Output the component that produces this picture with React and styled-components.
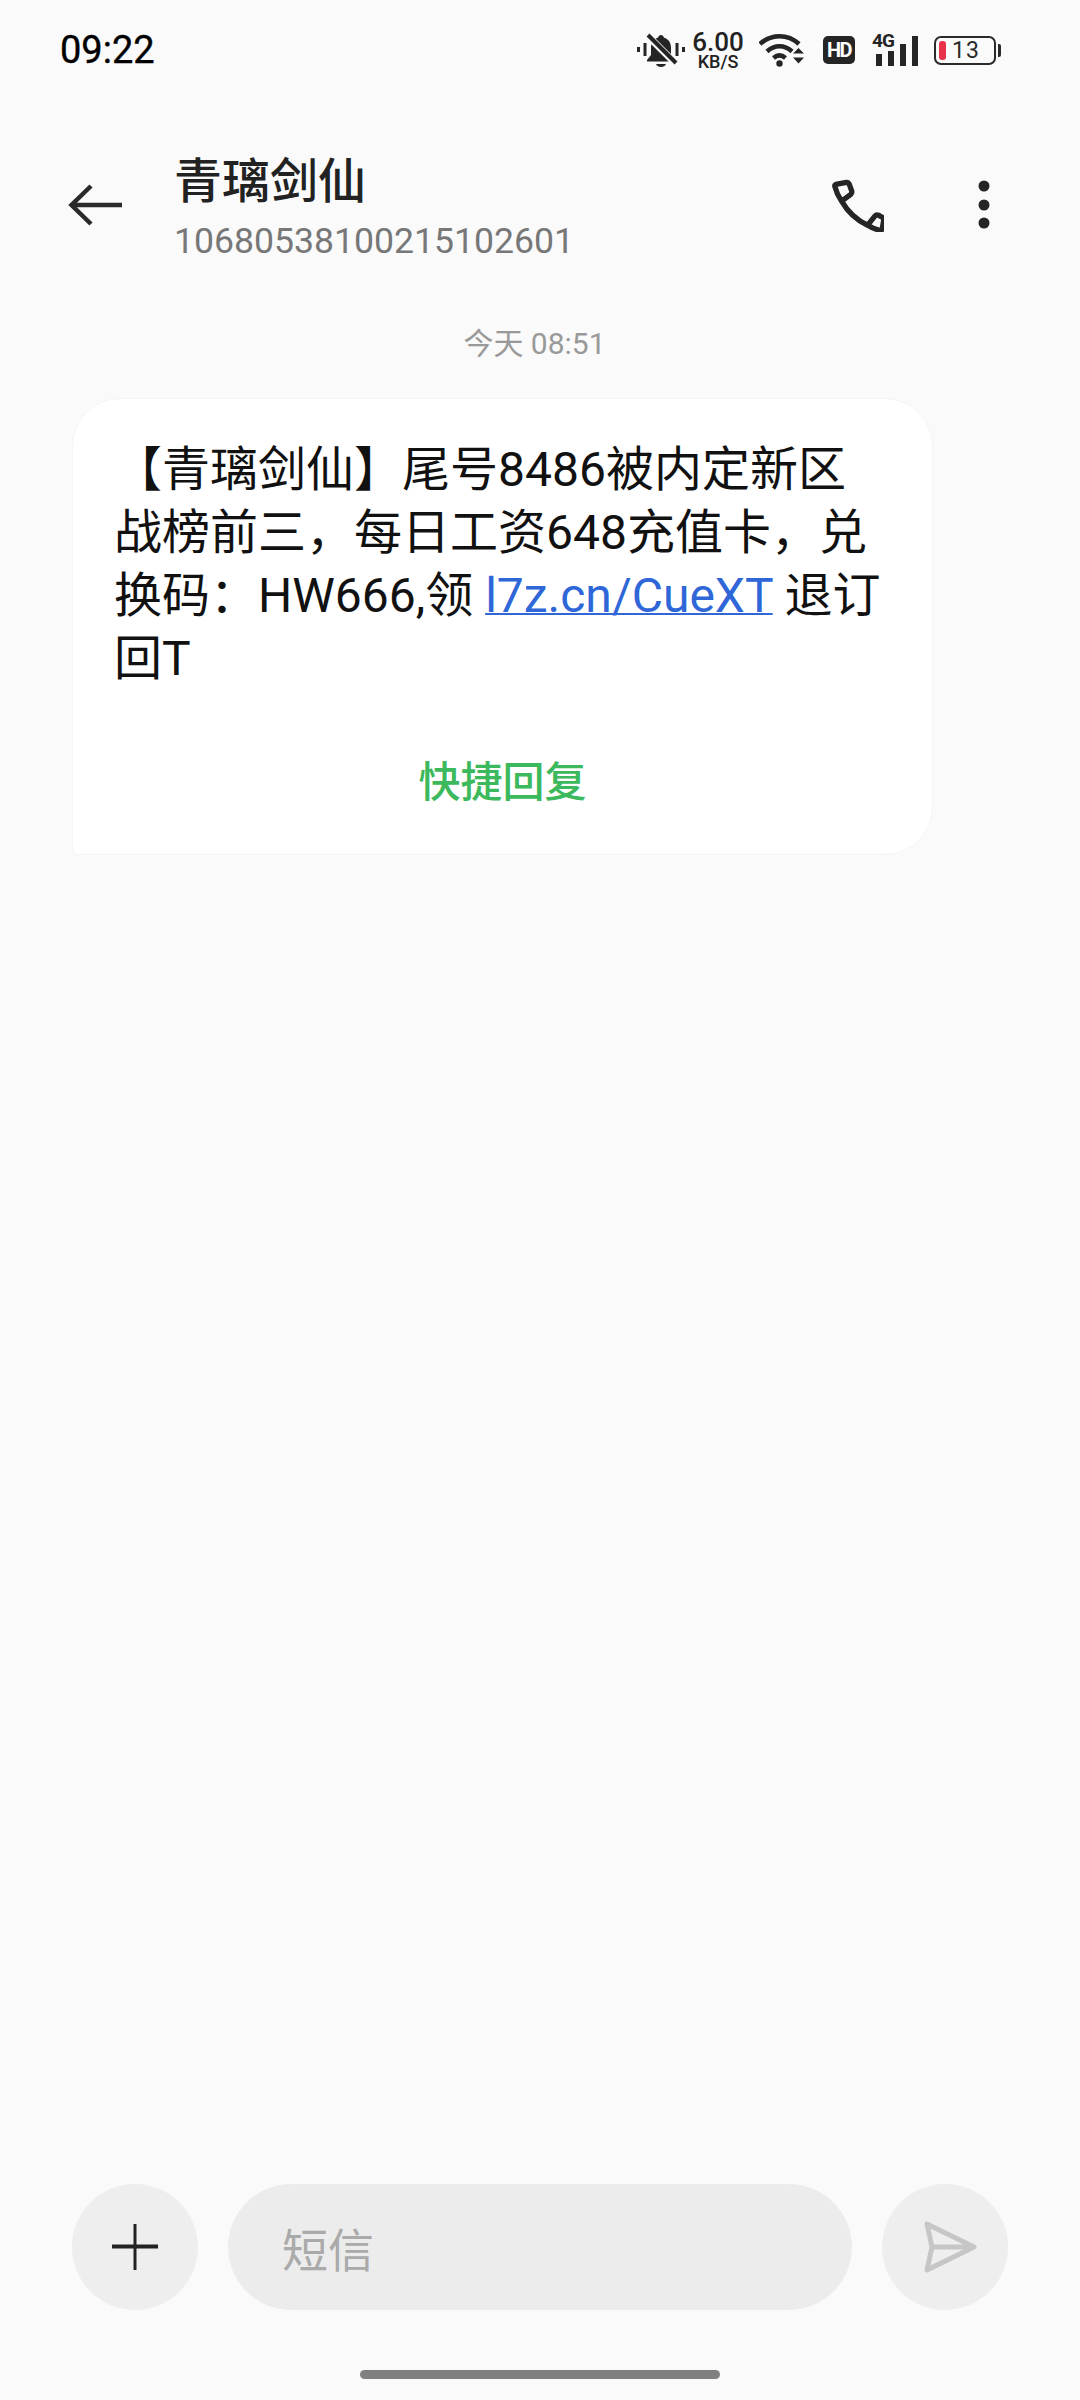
import React from 'react';
import styled, { createGlobalStyle } from 'styled-components';

const GlobalStyle = createGlobalStyle`
  html, body {
    margin: 0;
    padding: 0;
    background: #fafafa;
  }
  body {
    font-family: Roboto, "Noto Sans CJK SC", sans-serif;
  }
`;

const Page = styled.div`
  width: 1080px;
  height: 2400px;
  display: flex;
  flex-direction: column;
  background: #fafafa;
  overflow: hidden;
`;

const StatusBar = styled.div`
  height: 100px;
  display: flex;
  align-items: center;
  justify-content: space-between;
  padding: 0 79px 0 60px;
  box-sizing: border-box;
`;

const Time = styled.div`
  font-size: 38px;
  font-weight: 400;
  color: #000;
  -webkit-text-stroke: 0.4px #000;
`;

const StatusIcons = styled.div`
  display: flex;
  align-items: center;
`;

const Speed = styled.div`
  width: 52px;
  margin: 0 15px 0 7px;
  display: flex;
  flex-direction: column;
  align-items: center;
  color: #222;
  font-weight: 500;
`;

const SpeedValue = styled.span`
  font-size: 26px;
  line-height: 22px;
`;

const SpeedUnit = styled.span`
  font-size: 18px;
  line-height: 17px;
`;

const HdBadge = styled.div`
  width: 32px;
  height: 28px;
  margin: 0 17px 0 18px;
  border-radius: 5px;
  background: #252525;
  color: #fff;
  font-size: 20px;
  font-weight: 700;
  line-height: 28px;
  text-align: center;
  letter-spacing: -1.500px;
`;

const Signal = styled.div`
  position: relative;
  width: 46px;
  height: 32px;
  margin-right: 16px;
  display: flex;
  align-items: flex-end;
  justify-content: flex-end;
  gap: 6px;
`;

const SignalLabel = styled.span`
  position: absolute;
  left: 0;
  top: -1px;
  font-size: 19px;
  font-weight: 700;
  line-height: 16px;
  letter-spacing: -1px;
  color: #252525;
`;

const SignalBar = styled.span`
  width: 6px;
  height: ${(p) => p.$h}px;
  background: #252525;
`;

const Battery = styled.div`
  width: 62px;
  height: 29px;
  border: 2px solid #2a2a2a;
  border-radius: 7px;
  box-sizing: border-box;
  padding: 3px;
  display: flex;
  align-items: stretch;
  position: relative;
`;

const BatteryLevel = styled.span`
  width: 7px;
  background: #e8324a;
  border-radius: 3px;
`;

const BatteryText = styled.span`
  margin-left: 6px;
  font-size: 23px;
  line-height: 20px;
  letter-spacing: 1px;
  color: #2a2a2a;
`;

const BatteryCap = styled.span`
  width: 3px;
  height: 13px;
  margin-left: 2px;
  background: #2a2a2a;
  border-radius: 0 2px 2px 0;
`;

const Header = styled.div`
  height: 116px;
  margin-top: 50px;
  display: flex;
  align-items: flex-start;
  padding-left: 68px;
  box-sizing: border-box;
`;

const IconSlot = styled.div`
  width: ${(p) => p.$w}px;
  height: 110px;
  display: flex;
  align-items: center;
  flex-shrink: 0;
`;

const TitleBlock = styled.div`
  flex: 1;
  padding-left: 2px;
  display: flex;
  flex-direction: column;
`;

const Title = styled.div`
  font-size: 48px;
  font-weight: 500;
  line-height: 60px;
  margin-top: 2px;
  color: #222;
`;

const Subtitle = styled.div`
  font-size: 35.600px;
  line-height: 42px;
  margin-top: 8px;
  color: #777;
`;

const DateLine = styled.div`
  margin-top: 58px;
  padding-right: 11px;
  text-align: center;
  font-size: 30px;
  line-height: 40px;
  color: #999;
`;

const Bubble = styled.div`
  width: 861px;
  margin: 34px 0 0 72px;
  padding: 39px 50px 41px 41px;
  box-sizing: border-box;
  background: #fff;
  border: 1px solid #f4f4f4;
  border-radius: 48px 48px 48px 6px;
`;

const MessageText = styled.div`
  font-size: 48px;
  line-height: 63px;
  color: #111;
`;

const MessageLink = styled.span`
  color: #2f66d8;
  text-decoration: underline;
  text-decoration-thickness: 2px;
`;

const QuickReply = styled.div`
  margin-top: 63px;
  padding-left: 9px;
  text-align: center;
  font-size: 42px;
  font-weight: 500;
  line-height: 60px;
  color: #3cb95c;
`;

const Spacer = styled.div`
  flex: 1;
`;

const Composer = styled.div`
  display: flex;
  align-items: center;
  gap: 30px;
  padding: 0 72px;
`;

const RoundButton = styled.div`
  width: 126px;
  height: 126px;
  flex-shrink: 0;
  border-radius: 50%;
  background: #eeeeee;
  display: flex;
  align-items: center;
  justify-content: center;
  padding-left: ${(p) => p.$shift || 0}px;
  box-sizing: border-box;
`;

const InputPill = styled.div`
  flex: 1;
  height: 126px;
  border-radius: 63px;
  background: #ececec;
  padding-left: 54px;
  display: flex;
  align-items: center;
  font-size: 46px;
  color: #aaa;
`;

const HomeBarRow = styled.div`
  height: 90px;
  display: flex;
  align-items: flex-start;
  justify-content: center;
  padding-top: 60px;
  box-sizing: border-box;
`;

const HomeBar = styled.div`
  width: 360px;
  height: 9px;
  border-radius: 5px;
  background: #808080;
`;

const BellOff = () => (
  <svg width="48" height="36" viewBox="0 0 48 36">
    <path d="M24 3c-1.500 0-2.600 1-2.800 2.400C16 7 14 11 14 16v7l-4 5v1.500h28V28l-4-5v-7c0-5-2-9-7.200-10.600C26.600 4 25.500 3 24 3z" fill="#252525" />
    <path d="M19 32h10c-.6 2-2.600 3-5 3s-4.400-1-5-3z" fill="#252525" />
    <path d="M10 3l31 31" stroke="#fafafa" strokeWidth="7" />
    <path d="M11 3l28 28" stroke="#252525" strokeWidth="4" />
    <path d="M1.500 15v5M46.500 15v5M8 11v13M40 11v13" stroke="#252525" strokeWidth="3" />
  </svg>
);

const Wifi = () => (
  <svg width="46" height="34" viewBox="0 0 46 34" fill="none">
    <path d="M1 11C12 .5 29 .5 40 11" stroke="#252525" strokeWidth="4.500" />
    <path d="M8 18.500c7.500-7 17.500-7 25 0" stroke="#252525" strokeWidth="4.500" />
    <path d="M14.500 25c4-3.500 8-3.500 12 0" stroke="#252525" strokeWidth="4.500" />
    <circle cx="20.500" cy="30.500" r="3.200" fill="#252525" />
    <path d="M34 20.500h11l-5.500-5.500zM34 24.500h11l-5.500 6z" fill="#252525" />
  </svg>
);

const BackArrow = () => (
  <svg width="54" height="42" viewBox="0 0 54 42" fill="none">
    <path d="M54 21H4M23 2L3.500 21 23 40" stroke="#2a2a2a" strokeWidth="4.500" />
  </svg>
);

const Phone = () => (
  <svg width="52" height="54" viewBox="0 0 54 56" fill="none">
    <path
      d="M4 6.500L15 4.500c1.500 0 2.500 1 3 2l2.500 7c.3 1.500 0 2.500-1 3.500L10 24 C6.500 19 4 13 3 9c-.3-1 0-2.300 1-2.500zM10 24c6 10.500 16 20 27 25M37 49l7.500-9.500c1-1.200 2.500-1.500 3.700-1l4.300 2.500c1 .6 1.300 1.500 1.200 2.500l-1.500 9c-.3 1.500-1.500 2.200-3 1.800C45 53 41 51.500 37 49z"
      stroke="#252525"
      strokeWidth="5.500"
      strokeLinejoin="round"
    />
  </svg>
);

const MoreDots = () => (
  <svg width="12" height="50" viewBox="0 0 12 50">
    <circle cx="6" cy="6" r="5.500" fill="#252525" />
    <circle cx="6" cy="25" r="5.500" fill="#252525" />
    <circle cx="6" cy="43" r="5.500" fill="#252525" />
  </svg>
);

const Plus = () => (
  <svg width="46" height="46" viewBox="0 0 46 46">
    <path d="M21.500 0h3v46h-3z" fill="#222" />
    <path d="M0 20.500h46v4H0z" fill="#222" />
  </svg>
);

const Send = () => (
  <svg width="54" height="52" viewBox="0 0 54 52" fill="none">
    <path
      d="M4 3l47 23L4 49l5-23zM9 26h42"
      stroke="#c6c6c6"
      strokeWidth="5"
      strokeLinejoin="round"
    />
  </svg>
);

export default function App() {
  return (
    <Page>
      <GlobalStyle />
      <StatusBar>
        <Time>09:22</Time>
        <StatusIcons>
          <BellOff />
          <Speed>
            <SpeedValue>6.00</SpeedValue>
            <SpeedUnit>KB/S</SpeedUnit>
          </Speed>
          <Wifi />
          <HdBadge>HD</HdBadge>
          <Signal>
            <SignalLabel>4G</SignalLabel>
            <SignalBar $h={12} />
            <SignalBar $h={15} />
            <SignalBar $h={22} />
            <SignalBar $h={30} />
          </Signal>
          <Battery>
            <BatteryLevel />
            <BatteryText>13</BatteryText>
          </Battery>
          <BatteryCap />
        </StatusIcons>
      </StatusBar>

      <Header>
        <IconSlot $w={104}>
          <BackArrow />
        </IconSlot>
        <TitleBlock>
          <Title>青璃剑仙</Title>
          <Subtitle>10680538100215102601</Subtitle>
        </TitleBlock>
        <IconSlot $w={146}>
          <Phone />
        </IconSlot>
        <IconSlot $w={102}>
          <MoreDots />
        </IconSlot>
      </Header>

      <DateLine>今天 08:51</DateLine>

      <Bubble>
        <MessageText>
          【青璃剑仙】尾号8486被内定新区战榜前三，每日工资648充值卡，兑换码：HW666,领{' '}
          <MessageLink>l7z.cn/CueXT</MessageLink> 退订回T
        </MessageText>
        <QuickReply>快捷回复</QuickReply>
      </Bubble>

      <Spacer />

      <Composer>
        <RoundButton>
          <Plus />
        </RoundButton>
        <InputPill>短信</InputPill>
        <RoundButton $shift={9}>
          <Send />
        </RoundButton>
      </Composer>

      <HomeBarRow>
        <HomeBar />
      </HomeBarRow>
    </Page>
  );
}
